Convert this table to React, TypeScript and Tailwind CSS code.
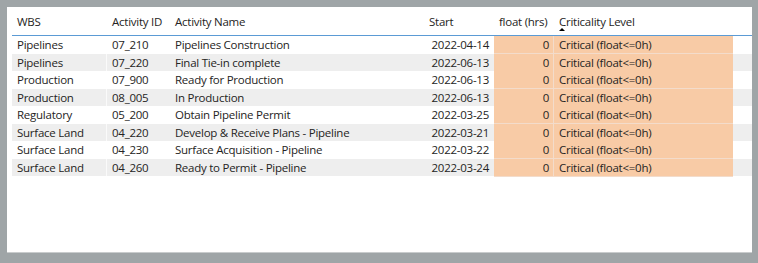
const rows = [
  { wbs: 'Pipelines', id: '07_210', name: 'Pipelines Construction', start: '2022-04-14' },
  { wbs: 'Pipelines', id: '07_220', name: 'Final Tie-in complete', start: '2022-06-13' },
  { wbs: 'Production', id: '07_900', name: 'Ready for Production', start: '2022-06-13' },
  { wbs: 'Production', id: '08_005', name: 'In Production', start: '2022-06-13' },
  { wbs: 'Regulatory', id: '05_200', name: 'Obtain Pipeline Permit', start: '2022-03-25' },
  { wbs: 'Surface Land', id: '04_220', name: 'Develop & Receive Plans - Pipeline', start: '2022-03-21' },
  { wbs: 'Surface Land', id: '04_230', name: 'Surface Acquisition - Pipeline', start: '2022-03-22' },
  { wbs: 'Surface Land', id: '04_260', name: 'Ready to Permit - Pipeline', start: '2022-03-24' },
];

const cols = 'grid grid-cols-[95px_63px_254px_70px_60px_179px]';

export default function App() {
  return (
    <div
      className="w-[758px] h-[263px] bg-[#9fa5a7] pt-[7px] pl-[7px] pr-[6px] pb-[10px]"
      style={{ fontFamily: '"Segoe UI", "Open Sans", sans-serif' }}
    >
      <div className="h-full bg-white pl-[5px] border-b border-[#c9cccd]">
        {/* header */}
        <div className={`${cols} h-[29px] border-b border-[#5b9bd5] text-[11.5px] tracking-[-0.25px] text-[#252423] whitespace-nowrap`}>
          <div className="px-[5px] pt-[6px]">WBS</div>
          <div className="px-[5px] pt-[6px]">Activity ID</div>
          <div className="px-[5px] pt-[6px]">Activity Name</div>
          <div className="px-[5px] pt-[6px]">Start</div>
          <div className="px-[5px] pt-[6px]">float (hrs)</div>
          <div className="relative px-[5px] pt-[6px]">
            Criticality Level
            <span className="absolute left-[5px] top-[21px] w-0 h-0 border-l-[3px] border-r-[3px] border-b-[3px] border-l-transparent border-r-transparent border-b-black" />
          </div>
        </div>

        {/* rows */}
        {rows.map((r, i) => (
          <div
            key={r.id}
            className={`${cols} h-[17.5px] text-[11.5px] tracking-[-0.25px] leading-[17px] text-[#252423] whitespace-nowrap ${i % 2 === 1 ? 'bg-[#eeeeee]' : 'bg-white'}`}
          >
            <div className="px-[5px] border-r border-white/70">{r.wbs}</div>
            <div className="px-[5px]">{r.id}</div>
            <div className="px-[5px]">{r.name}</div>
            <div className="px-[5px] text-right">{r.start}</div>
            <div className="px-[4px] text-right bg-[#f8cba6] border-b border-[#f3dccb] border-r border-r-[#f3dccb]">0</div>
            <div className="px-[5px] bg-[#f8cba6] border-b border-[#f3dccb]">Critical (float&lt;=0h)</div>
          </div>
        ))}
      </div>
    </div>
  );
}
